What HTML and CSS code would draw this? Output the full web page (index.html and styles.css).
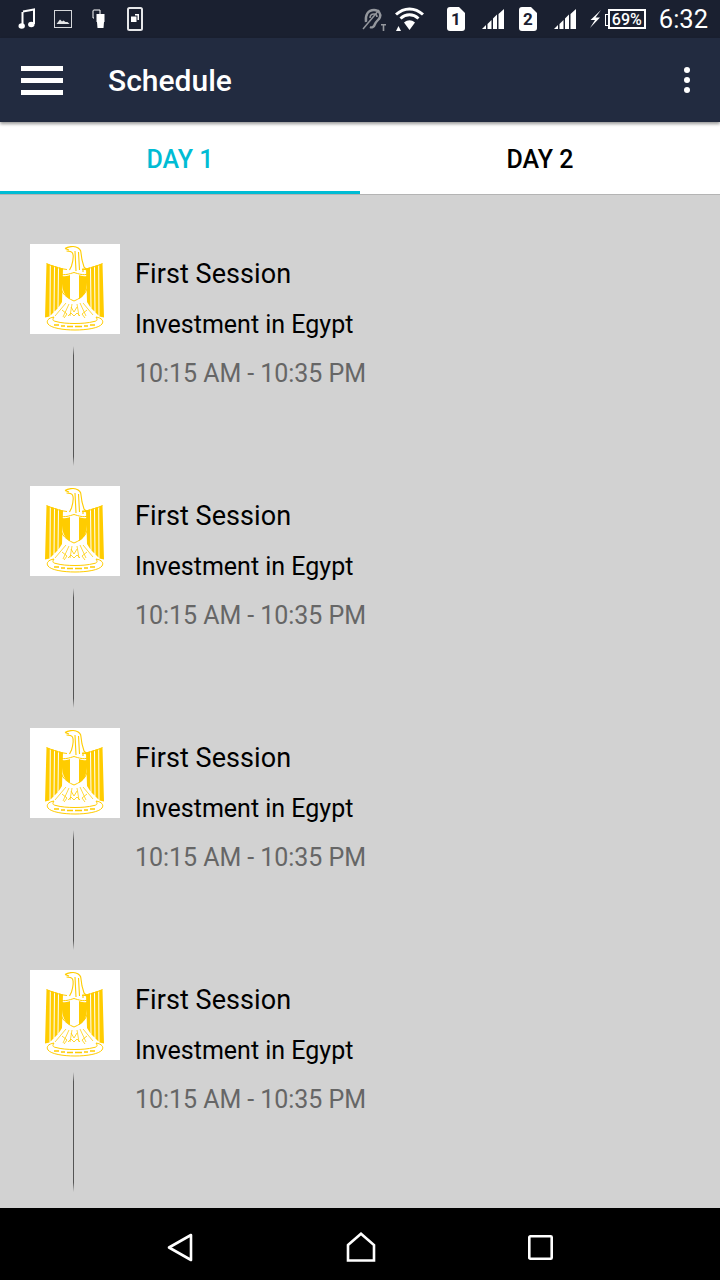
FILE: index.html
```html
<!DOCTYPE html>
<html lang="en">
<head>
<meta charset="utf-8">
<title>Schedule</title>
<link rel="stylesheet" href="styles.css">
</head>
<body>
<svg class="defs" width="0" height="0" aria-hidden="true">
  <defs>
    <g id="wing">
      <path d="M16.500 19.500 19.800 20.500 19.500 72.500 15 73.500zM20.800 20.800 24 21.800 23.500 68.500 20.500 71.500zM25 22 28 23 27.500 64.500 24.500 67.500zM29 23.300 33 24.500 32 58 28.500 63.500z" fill="#ffcc00"/>
      <path d="M16.500 19.500C22 22 30 25 37 25.500" fill="none" stroke="#ffcc00" stroke-width="1"/>
    </g>
    <symbol id="emblem" viewBox="0 0 90 90">
      <use href="#wing"/>
      <use href="#wing" transform="matrix(-1 0 0 1 89 0)"/>
      <g fill="none" stroke="#ffcc00">
        <path d="M35 4.500C38 2.500 44 2 46 3c3 1 5 3 5 6l1 7 2 7 3 3-4-1v3M35 4.500l4 1.500M36.500 7c3 0 5 .5 6 2 1.500 3 .5 8-1 13l-2 4M45 7l1 20M48.500 8l1 18" stroke-width="1.100"/>
        <path d="M30 30c5 1.500 9 0 14-1.500 5 1.500 9 3 14 1.500 1 7 0 14-3 19-2 3-6 6-11 8-5-2-9-5-11-8-3-5-4-12-3-19z" stroke-width="1"/>
        <path d="M36 59 25 72M39 60l-6 13M42 60l-2 12M47 60l2 12M50 59l6 13M53 59l10 12" stroke-width="1" stroke-opacity=".75"/>
        <path d="M32 66l5 4-3 4M57 66l-5 4 3 4M41 63l3 5 3-5M38 72l3-3 3 3 3-3 3 3" stroke-width="1" stroke-opacity=".8"/>
        <path d="M24 73c-6 1-8 4-6 7 3 4 15 6 27 6s24-2 27-6c2-3 0-6-6-7 2 3 1 4-2 4.500-6 1.500-12 2-19 2s-14-.5-19-2c-3-.5-4-1.500-2-4.500z" stroke-width="1"/>
        <path d="M24 81h5M31 82h4M37 82.500h6M45 82.500h7M54 82h4M60 81h5" stroke-width="1.500"/>
      </g>
      <path d="M32 32c4 .5 6 0 8-1v24c-2-1-3.500-2.500-5-4.500-2.500-4-3.500-11-3-18.500zM57 32c-4 .5-6 0-8-1v24c2-1 3.500-2.500 5-4.500 2.500-4 3.500-11 3-18.500z" fill="#ffcc00"/>
    </symbol>
  </defs>
</svg>
<div class="phone">
  <header class="status">
    <div class="status-left">
      <svg class="ico" width="18" height="22" viewBox="0 0 18 22"><path d="M5 3.500 16 1.500V16" fill="none" stroke="#fff" stroke-width="2"/><ellipse cx="3.700" cy="18" rx="3.200" ry="2.800" fill="#fff"/><ellipse cx="13.300" cy="16.500" rx="3.200" ry="2.800" fill="#fff"/><path d="M4.500 4v14" stroke="#fff" stroke-width="2"/></svg>
      <svg class="ico" width="18" height="18" viewBox="0 0 18 18"><rect x=".5" y=".5" width="17" height="17" fill="none" stroke="#d5d7da"/><path d="M2.500 14 6 9.500l2 2 1.500-1 2 1.500 2 0 2 2z" fill="#e4e5e7"/></svg>
      <svg class="ico" width="14" height="20" viewBox="0 0 14 20"><path d="M8 5V1H2q-1 0-1 1v7h1" fill="none" stroke="#fff"/><rect x="4.500" y="5" width="8" height="8" fill="#fff"/><path d="M5 13h7l-.5 6h-6z" fill="#fff"/></svg>
      <svg class="ico" width="16" height="24" viewBox="0 0 16 24"><rect x="1" y="1" width="14" height="22" rx="1.500" fill="none" stroke="#e6e7e9" stroke-width="2"/><path d="M8 7h4v6h-1.500V8.500H8z" fill="#fff"/><rect x="4" y="9.500" width="5.500" height="5.500" fill="#fff"/></svg>
    </div>
    <div class="status-right">
      <svg class="ico" width="26" height="25" viewBox="0 0 26 25"><path d="M5 15c-1-7 2-12 8-12 5 0 7 4 6 7-1 3-4 4-5 7-1 3-3 4-5 3" fill="none" stroke="#94979d" stroke-width="2.400"/><path d="M9 11c0-3 2-4 4-4s3 1 3 3" fill="none" stroke="#94979d" stroke-width="1.600"/><path d="M2 22 18 3" stroke="#94979d" stroke-width="1.500"/><path d="M20 17h5v1.500h-1.700V24h-1.600v-5.500H20z" fill="#94979d"/></svg>
      <svg class="ico wifi" width="29" height="24" viewBox="0 0 29 24"><path d="M1 7.500c8-7.500 19-7.500 27 0" fill="none" stroke="#fff" stroke-width="3"/><path d="M5.500 11.500c5.500-5 12.500-5 18 0" fill="none" stroke="#fff" stroke-width="3"/><path d="M9 15.500c4-3 7-3 11 0l-5.500 7.500z" fill="#fff"/><path d="M1 24l2.500-5 2.500 5z" fill="#fff"/></svg>
      <svg class="ico" width="18" height="24" viewBox="0 0 18 24"><path d="M3 0h9l6 6v15a3 3 0 0 1-3 3H3a3 3 0 0 1-3-3V3a3 3 0 0 1 3-3z" fill="#fff"/></svg>
      <span class="sim-num">1</span>
      <svg class="ico bars" width="23" height="22" viewBox="0 0 23 22"><path d="M0 21h4v-4l-4 4zM5.500 21h4v-9l-4 4zM11 21h4V6.500l-4 4zM16.500 21H22V1l-5.500 5z" fill="#fff"/></svg>
      <svg class="ico sim-two" width="18" height="24" viewBox="0 0 18 24"><path d="M3 0h9l6 6v15a3 3 0 0 1-3 3H3a3 3 0 0 1-3-3V3a3 3 0 0 1 3-3z" fill="#fff"/></svg>
      <span class="sim-num">2</span>
      <svg class="ico bars" width="23" height="22" viewBox="0 0 23 22"><path d="M0 21h4v-4l-4 4zM5.500 21h4v-9l-4 4zM11 21h4V6.500l-4 4zM16.500 21H22V1l-5.500 5z" fill="#fff"/></svg>
      <svg class="ico bolt" width="12" height="18" viewBox="0 0 12 18"><path d="M12 0 1.500 10H6L1 18 11 7.500H6.500z" fill="#fff"/></svg>
      <div class="battery"><span>69%</span></div>
      <span class="clock">6:32</span>
    </div>
  </header>

  <div class="appbar">
    <div class="burger"><i></i><i></i><i></i></div>
    <h1 class="title">Schedule</h1>
    <div class="more"><i></i><i></i><i></i></div>
  </div>

  <nav class="tabs">
    <div class="tab active">DAY 1</div>
    <div class="tab">DAY 2</div>
  </nav>

  <main class="list">
    <article class="item">
      <div class="rail">
        <div class="logo"><svg width="90" height="90"><use href="#emblem"/></svg></div>
        <div class="line"></div>
      </div>
      <div class="info">
        <div class="name">First Session</div>
        <div class="topic">Investment in Egypt</div>
        <div class="time">10:15 AM - 10:35 PM</div>
      </div>
    </article>
    <article class="item">
      <div class="rail">
        <div class="logo"><svg width="90" height="90"><use href="#emblem"/></svg></div>
        <div class="line"></div>
      </div>
      <div class="info">
        <div class="name">First Session</div>
        <div class="topic">Investment in Egypt</div>
        <div class="time">10:15 AM - 10:35 PM</div>
      </div>
    </article>
    <article class="item">
      <div class="rail">
        <div class="logo"><svg width="90" height="90"><use href="#emblem"/></svg></div>
        <div class="line"></div>
      </div>
      <div class="info">
        <div class="name">First Session</div>
        <div class="topic">Investment in Egypt</div>
        <div class="time">10:15 AM - 10:35 PM</div>
      </div>
    </article>
    <article class="item">
      <div class="rail">
        <div class="logo"><svg width="90" height="90"><use href="#emblem"/></svg></div>
        <div class="line"></div>
      </div>
      <div class="info">
        <div class="name">First Session</div>
        <div class="topic">Investment in Egypt</div>
        <div class="time">10:15 AM - 10:35 PM</div>
      </div>
    </article>
  </main>

  <footer class="navbar">
    <svg width="26" height="29" viewBox="0 0 26 29"><path d="M24 2 2 14.500 24 27z" fill="none" stroke="#fff" stroke-width="2.600" stroke-linejoin="round"/></svg>
    <svg width="30" height="30" viewBox="0 0 30 30"><path d="M2 13 15 1.800 28 13v15.500H2z" fill="none" stroke="#fff" stroke-width="2.600"/></svg>
    <svg width="25" height="25" viewBox="0 0 25 25"><rect x="1.300" y="1.300" width="22.400" height="22.400" rx="1" fill="none" stroke="#fff" stroke-width="2.600"/></svg>
  </footer>
</div>
</body>
</html>
```
FILE: styles.css
```css
* { box-sizing: border-box; }
html, body { margin: 0; padding: 0; }
body { font-family: Roboto, "Liberation Sans", sans-serif; background: #d2d2d2; }
.defs { display: block; height: 0; }
.phone { width: 720px; height: 1280px; display: flex; flex-direction: column; overflow: hidden; }

.status { height: 38px; flex: none; background: #1a2030; display: flex; justify-content: space-between; align-items: center; padding: 0 12px 0 18px; }
.status-left { display: flex; align-items: center; gap: 18px; }
.status-right { display: flex; align-items: center; }
.ico { display: block; flex: none; }
.status-left .ico:nth-child(3) { margin-left: 2px; }
.status-left .ico:nth-child(4) { margin-left: 3px; }
.wifi { margin-left: 8px; margin-right: 23px; }
.sim-num { width: 18px; margin-left: -18px; text-align: center; font-size: 17px; font-weight: 700; color: #1a2030; line-height: 24px; position: relative; }
.bars { margin-left: 17px; }
.sim-two { margin-left: 14px; }
.bolt { margin-left: 12px; }
.battery { margin-left: 7px; width: 38px; height: 20px; border: 2px solid #fff; display: flex; align-items: center; justify-content: center; color: #fff; font-size: 16px; font-weight: 500; position: relative; }
.battery::before { content: ""; position: absolute; left: -5px; top: 3px; width: 3px; height: 10px; border: 1px solid #fff; border-right: 0; }
.clock { margin-left: 13px; color: #fff; font-size: 25.500px; font-weight: 400; line-height: 30px; }

.appbar { height: 84px; flex: none; background: #222b40; display: flex; align-items: center; padding: 0 30px 0 21px; position: relative; z-index: 2; box-shadow: 0 2px 3px rgba(0,0,0,.4); }
.burger { width: 42px; display: flex; flex-direction: column; gap: 7px; }
.burger i { display: block; height: 5px; background: #fff; }
.title { margin: 0 0 0 45px; padding-top: 2px; flex: 1; color: #fff; font-size: 30px; font-weight: 500; line-height: 34px; }
.more { display: flex; flex-direction: column; gap: 4px; }
.more i { display: block; width: 6px; height: 6px; border-radius: 50%; background: #fff; }

.tabs { height: 73px; flex: none; background: #fff; display: flex; border-bottom: 1px solid #b4b4b4; }
.tab { width: 50%; padding-top: 1px; text-align: center; font-size: 25px; font-weight: 500; color: #000; line-height: 74px; }
.tab.active { color: #00bcd4; border-bottom: 3px solid #00bcd4; }

.list { flex: 1; min-height: 0; background: #d2d2d2; padding: 49px 0 0 30px; display: flex; flex-direction: column; }
.item { height: 242px; flex: none; display: flex; }
.rail { width: 90px; display: flex; flex-direction: column; align-items: center; }
.logo { width: 90px; height: 90px; background: #fff; flex: none; }
.logo svg { display: block; }
.line { width: 1px; height: 120px; margin-top: 12px; margin-right: 4px; background: linear-gradient(#d2d2d2, #555 8%, #555 92%, #d2d2d2); }
.info { margin-left: 15px; padding-top: 13px; }
.name { font-size: 27px; line-height: 34px; color: #000; letter-spacing: .08px; }
.topic { font-size: 25px; line-height: 30px; margin-top: 19px; color: #000; }
.time { font-size: 25px; line-height: 30px; margin-top: 19px; color: #666; letter-spacing: -.05px; }

.navbar { height: 72px; flex: none; background: #000; display: flex; align-items: center; padding: 6px 167px 0 167px; justify-content: space-between; }
.navbar svg { display: block; }
```
